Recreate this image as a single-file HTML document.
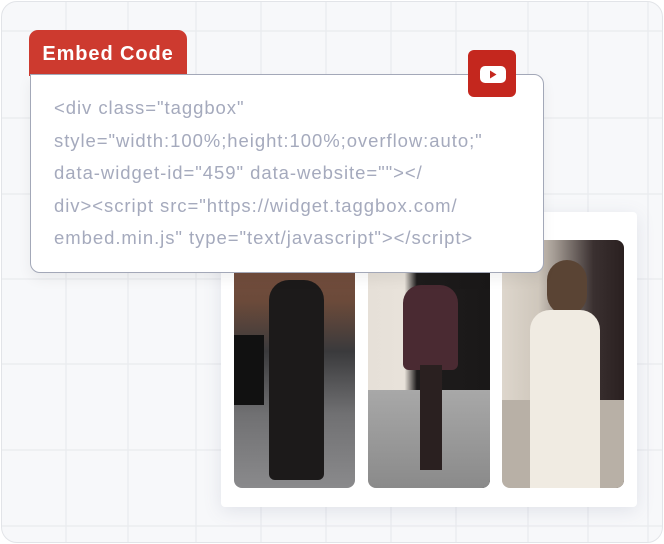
<!DOCTYPE html>
<html><head><meta charset="utf-8"><style>
html,body{margin:0;padding:0;background:#fff;}
body{width:664px;height:544px;position:relative;overflow:hidden;font-family:"Liberation Sans",sans-serif;}
.outer{position:absolute;left:1px;top:1px;width:660px;height:540px;border:1.5px solid #e2e4e8;border-radius:16px;background:#f7f8fa;overflow:hidden;}
.tab{position:absolute;left:29px;top:30px;width:158px;height:46px;background:#cd3a2f;border-radius:9px 9px 0 0;color:#fff;font-size:20px;font-weight:bold;line-height:48px;text-align:center;letter-spacing:0.9px;}
.code{position:absolute;left:30px;top:74px;width:512px;height:197px;background:#fff;border:1.5px solid #a3a8b8;border-radius:0 10px 10px 10px;box-shadow:0 6px 14px rgba(0,0,0,0.06);}
.code p{margin:0;position:absolute;left:23px;top:17px;color:#a5aabd;font-size:18.5px;line-height:32.5px;white-space:pre;letter-spacing:0.95px;}
.yt{position:absolute;left:468px;top:50px;width:48px;height:47px;background:#c4271e;border-radius:6px;}
.card{position:absolute;left:221px;top:212px;width:416px;height:295px;background:#fff;border-radius:4px;box-shadow:0 4px 18px rgba(100,110,140,0.15);}
.img{position:absolute;top:28px;height:248px;border-radius:8px;overflow:hidden;}
</style></head><body>
<div class="outer">
<svg width="664" height="544" style="position:absolute;left:-1px;top:-1px" stroke="#e9ebee" stroke-width="1.2">
<line x1="65" y1="0" x2="65" y2="544"/><line x1="127" y1="0" x2="127" y2="544"/><line x1="195" y1="0" x2="195" y2="544"/><line x1="260" y1="0" x2="260" y2="544"/><line x1="325" y1="0" x2="325" y2="544"/><line x1="390" y1="0" x2="390" y2="544"/><line x1="455" y1="0" x2="455" y2="544"/><line x1="527" y1="0" x2="527" y2="544"/><line x1="587" y1="0" x2="587" y2="544"/><line x1="647" y1="0" x2="647" y2="544"/>
<line x1="0" y1="30" x2="664" y2="30"/><line x1="0" y1="117" x2="664" y2="117"/><line x1="0" y1="193" x2="664" y2="193"/><line x1="0" y1="278" x2="664" y2="278"/><line x1="0" y1="363" x2="664" y2="363"/><line x1="0" y1="449" x2="664" y2="449"/><line x1="0" y1="525" x2="664" y2="525"/>
</svg>
</div>
<div class="card">
 <div class="img" style="left:13px;width:121px;background:linear-gradient(180deg,#7a5040 0%,#6b4a3a 25%,#3a3a3c 45%,#707072 70%,#8a8a8c 100%);">
  <div style="position:absolute;left:35px;top:40px;width:55px;height:200px;background:#1c1a1a;border-radius:20px 20px 6px 6px"></div>
  <div style="position:absolute;left:0;top:95px;width:30px;height:70px;background:#111;"></div>
 </div>
 <div class="img" style="left:147px;width:122px;background:linear-gradient(90deg,#e6e0d8 0%,#e8e2da 30%,#1e1c1c 40%,#1a1818 100%);">
  <div style="position:absolute;left:0;top:150px;width:122px;height:98px;background:linear-gradient(#a8a8a8,#8a8a8a);"></div>
  <div style="position:absolute;left:35px;top:45px;width:55px;height:85px;background:#4a2a32;border-radius:18px 18px 6px 6px"></div>
  <div style="position:absolute;left:52px;top:125px;width:22px;height:105px;background:#2a2020;"></div>
 </div>
 <div class="img" style="left:281px;width:122px;background:linear-gradient(90deg,#ddd6cc 0%,#cfc7bc 30%,#3a3030 75%,#2a2020 100%);">
  <div style="position:absolute;left:0;top:160px;width:122px;height:88px;background:#b8b0a6;"></div>
  <div style="position:absolute;left:45px;top:20px;width:40px;height:55px;background:#5a4434;border-radius:20px"></div>
  <div style="position:absolute;left:28px;top:70px;width:70px;height:178px;background:#f0ebe2;border-radius:20px 20px 0 0"></div>
 </div>
</div>
<div class="tab">Embed Code</div>
<div class="code"><p>&lt;div class="taggbox"
style="width:100%;height:100%;overflow:auto;"
data-widget-id="459" data-website=""&gt;&lt;/
div&gt;&lt;script src="https://widget.taggbox.com/
embed.min.js" type="text/javascript"&gt;&lt;/script&gt;</p></div>
<div class="yt"><svg width="48" height="47" viewBox="0 0 48 47"><rect x="12" y="16" width="26" height="17" rx="5" fill="#fff"/><path d="M22 20.5 L28.5 24.5 L22 28.5 Z" fill="#c4271e"/></svg></div>
</body></html>
